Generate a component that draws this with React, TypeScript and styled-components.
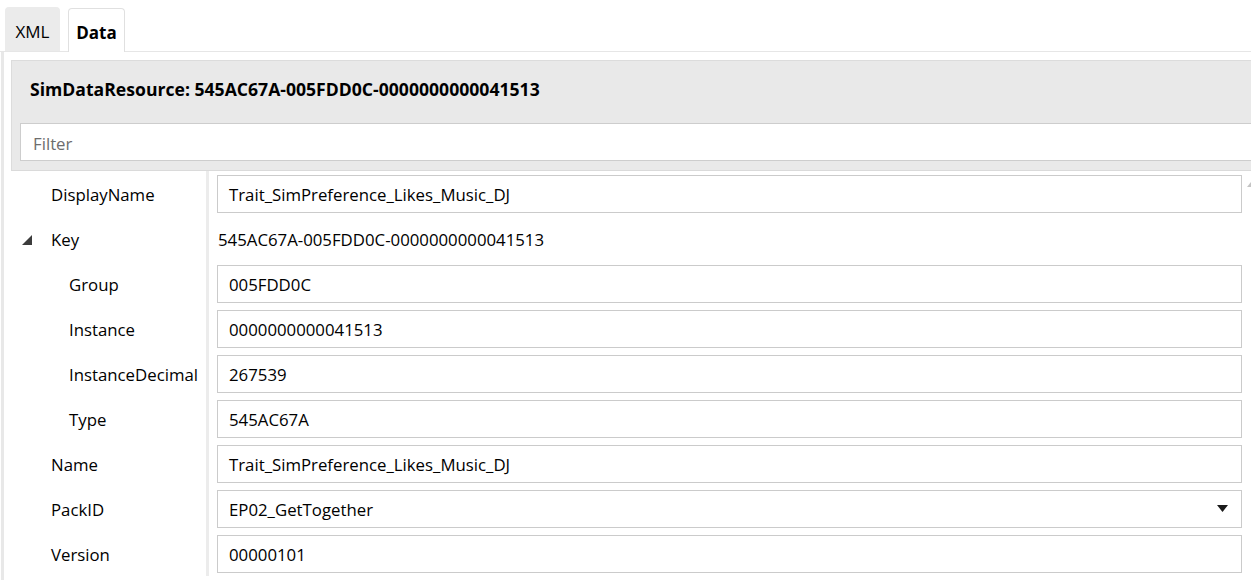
import styled, { createGlobalStyle } from "styled-components";

const GlobalStyle = createGlobalStyle`
  html, body {
    margin: 0;
    padding: 0;
    background: #ffffff;
    overflow: hidden;
  }
  body {
    font-family: "Open Sans", "Noto Sans", "Liberation Sans", sans-serif;
    font-size: 16.8px;
    color: #000000;
  }
`;

const Page = styled.div`
  width: 1251px;
  height: 580px;
  display: flex;
  flex-direction: column;
  overflow: hidden;
`;

const TabStrip = styled.div`
  display: flex;
  align-items: flex-end;
  gap: 8px;
  height: 52px;
  padding-left: 5px;
  box-sizing: border-box;
  border-bottom: 1px solid #e6e6e6;
`;

const Tab = styled.div<{ $active?: boolean }>`
  height: 44px;
  width: ${(p) => (p.$active ? "57px" : "55px")};
  box-sizing: border-box;
  display: flex;
  align-items: center;
  justify-content: center;
  font-size: 17px;
  font-weight: ${(p) => (p.$active ? 700 : 400)};
  background: ${(p) => (p.$active ? "#ffffff" : "#ebebeb")};
  border: 1px solid ${(p) => (p.$active ? "#e0e0e0" : "#ebebeb")};
  border-bottom: none;
  border-radius: 4px 4px 0 0;
  margin-bottom: ${(p) => (p.$active ? "-1px" : "0")};
  padding-top: 3px;
`;

const Body = styled.div`
  flex: 1;
  border-left: 3px solid #e8e8e8;
  margin-left: 1px;
  padding: 8px 0 0 7px;
  display: flex;
  flex-direction: column;
  position: relative;
`;

const Panel = styled.div`
  background: #e9e9e9;
  border-top: 1px solid #dcdcdc;
  border-left: 1px solid #dcdcdc;
  border-bottom: 1px solid #dadada;
  padding: 0 0 9px 8px;
`;

const Title = styled.div`
  height: 62px;
  display: flex;
  align-items: center;
  padding-left: 10px;
  padding-bottom: 7px;
  box-sizing: border-box;
  font-size: 17.6px;
  font-weight: 700;
`;

const Filter = styled.div`
  height: 38px;
  box-sizing: border-box;
  background: #ffffff;
  border: 1px solid #cdcdcd;
  border-right: none;
  display: flex;
  align-items: center;
  padding: 2px 0 0 12px;
  color: #6d6d6d;
`;

const Grid = styled.div`
  display: grid;
  grid-template-columns: 195px 1fr;
  grid-auto-rows: 45px;
`;

const LabelCell = styled.div<{ $indent: number }>`
  display: flex;
  align-items: center;
  padding: 2px 0 0 ${(p) => p.$indent}px;
`;

const Expander = styled.svg`
  width: 10px;
  height: 10px;
  margin-right: 19px;
  margin-left: -29px;
`;

const ValueCell = styled.div`
  display: flex;
  align-items: center;
  border-left: 3px solid #ececec;
  padding: 0 9px 0 8px;
`;

const Field = styled.div`
  flex: 1;
  height: 38px;
  box-sizing: border-box;
  background: #ffffff;
  border: 1px solid #cbcbcb;
  display: flex;
  align-items: center;
  padding: 2px 11px 0;
`;

const Plain = styled.div`
  padding: 2px 0 0 1px;
`;

const Caret = styled.svg`
  width: 11px;
  height: 7px;
  margin-left: auto;
  margin-right: 2px;
  margin-top: -2px;
`;

const ScrollMark = styled.svg`
  position: absolute;
  right: 0;
  top: 130px;
  width: 4px;
  height: 5px;
`;

type Row = {
  label: string;
  indent: number;
  value: string;
  kind: "field" | "plain" | "select";
  expander?: boolean;
};

const rows: Row[] = [
  { label: "DisplayName", indent: 40, value: "Trait_SimPreference_Likes_Music_DJ", kind: "field" },
  { label: "Key", indent: 40, value: "545AC67A-005FDD0C-0000000000041513", kind: "plain", expander: true },
  { label: "Group", indent: 58, value: "005FDD0C", kind: "field" },
  { label: "Instance", indent: 58, value: "0000000000041513", kind: "field" },
  { label: "InstanceDecimal", indent: 58, value: "267539", kind: "field" },
  { label: "Type", indent: 58, value: "545AC67A", kind: "field" },
  { label: "Name", indent: 40, value: "Trait_SimPreference_Likes_Music_DJ", kind: "field" },
  { label: "PackID", indent: 40, value: "EP02_GetTogether", kind: "select" },
  { label: "Version", indent: 40, value: "00000101", kind: "field" },
];

export default function App() {
  return (
    <Page>
      <GlobalStyle />
      <TabStrip>
        <Tab>XML</Tab>
        <Tab $active>Data</Tab>
      </TabStrip>
      <Body>
        <Panel>
          <Title>SimDataResource: 545AC67A-005FDD0C-0000000000041513</Title>
          <Filter>Filter</Filter>
        </Panel>
        <Grid>
          {rows.flatMap((r) => [
            <LabelCell key={r.label + "-l"} $indent={r.indent}>
              {r.expander && (
                <Expander viewBox="0 0 10 10">
                  <path d="M10 0 L10 10 L0 10 Z" fill="#3c3c3c" />
                </Expander>
              )}
              {r.label}
            </LabelCell>,
            <ValueCell key={r.label + "-v"}>
              {r.kind === "plain" ? (
                <Plain>{r.value}</Plain>
              ) : (
                <Field>
                  {r.value}
                  {r.kind === "select" && (
                    <Caret viewBox="0 0 11 7">
                      <path d="M0 0 L11 0 L5.5 7 Z" fill="#1a1a1a" />
                    </Caret>
                  )}
                </Field>
              )}
            </ValueCell>,
          ])}
        </Grid>
        <ScrollMark viewBox="0 0 4 5">
          <path d="M4 0 L4 5 L0 5 Z" fill="#c4c4c4" />
        </ScrollMark>
      </Body>
    </Page>
  );
}
